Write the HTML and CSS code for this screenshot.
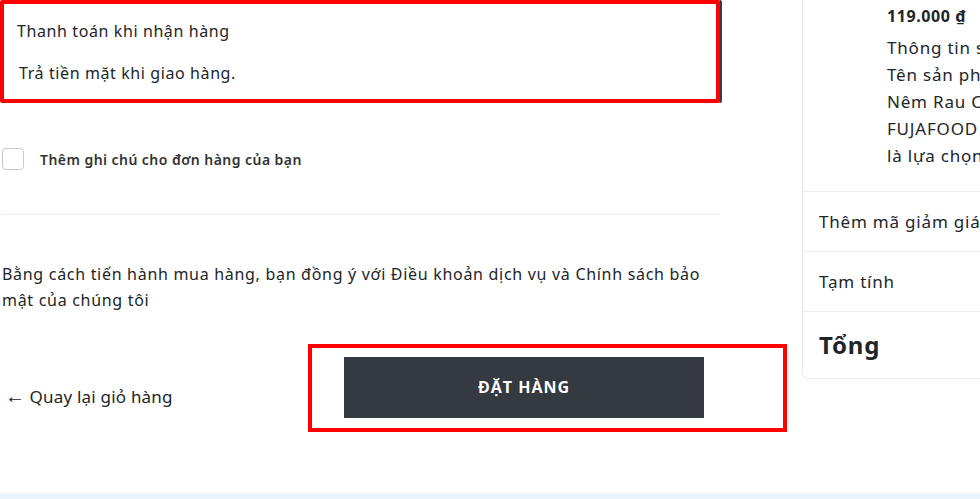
FILE: index.html
```html
<!DOCTYPE html>
<html lang="vi">
<head>
    <meta charset="UTF-8">
    <meta name="viewport" content="width=device-width, initial-scale=1.0">
    <title>Thanh toán</title>
    <link rel="stylesheet" href="styles.css">
</head>
<body>
    <div class="checkout">
        <div class="main">
            <div class="payment-option">
                <div class="payment-name">Thanh toán khi nhận hàng</div>
                <div class="payment-desc">Trả tiền mặt khi giao hàng.</div>
            </div>

            <label class="note-toggle">
                <span class="checkbox"></span>
                <span class="note-label">Thêm ghi chú cho đơn hàng của bạn</span>
            </label>

            <div class="divider"></div>

            <p class="terms">Bằng cách tiến hành mua hàng, bạn đồng ý với Điều khoản dịch vụ và Chính sách bảo mật của chúng tôi</p>

            <div class="actions">
                <a href="#" class="back-link"><span class="arrow">←</span> Quay lại giỏ hàng</a>
                <div class="submit-wrap">
                    <button class="submit">ĐẶT HÀNG</button>
                </div>
            </div>
        </div>

        <div class="summary">
            <div class="product">
                <div class="product-thumb"></div>
                <div class="product-info">
                    <div class="product-price">119.000 ₫</div>
                    <div class="product-desc">Thông tin sản phẩm<br>Tên sản phẩm: Hạt<br>Nêm Rau Củ<br>FUJAFOOD – Gia vị<br>là lựa chọn tuyệt vời</div>
                </div>
            </div>
            <div class="summary-row">Thêm mã giảm giá</div>
            <div class="summary-row">Tạm tính</div>
            <div class="summary-row total">Tổng</div>
        </div>
    </div>
    <div class="footer-strip"></div>
</body>
</html>
```

FILE: styles.css
```css
html, body {
    margin: 0;
    height: 100%;
    overflow: hidden;
}
body {
    font-family: 'Noto Sans', sans-serif;
    letter-spacing: 0.6px;
    color: #212529;
    background-color: #fff;
    display: flex;
    flex-direction: column;
}
.checkout {
    display: flex;
    gap: 82px;
    flex: 1;
    min-width: 0;
}
.main {
    width: 720px;
    flex-shrink: 0;
}
.payment-option {
    height: 103px;
    box-sizing: border-box;
    border: 4px solid #ff0000;
    box-shadow: 2px 0 0 #3a3d40;
    border-radius: 2px;
    padding: 16px 13px 0 13px;
    font-size: 16px;
}
.payment-name {
    line-height: 22px;
}
.payment-desc {
    margin-top: 20px;
    padding-left: 2px;
    line-height: 22px;
}
.note-toggle {
    display: flex;
    align-items: center;
    gap: 16px;
    margin: 45px 0 0 2px;
    cursor: pointer;
}
.checkbox {
    width: 22px;
    height: 22px;
    box-sizing: border-box;
    border: 1px solid #c8c8c8;
    border-radius: 4px;
}
.note-label {
    font-size: 14px;
    font-weight: 600;
    letter-spacing: 0.45px;
    color: #333;
}
.divider {
    height: 1px;
    background-color: #ececec;
    margin: 44px 0 0 2px;
}
.terms {
    font-size: 16px;
    line-height: 26px;
    letter-spacing: 0.7px;
    margin: 46px 0 0 2px;
}
.actions {
    display: grid;
    grid-template-columns: 308px 479px;
    align-items: center;
    margin-top: 31px;
}
.back-link {
    font-size: 17px;
    letter-spacing: 0.2px;
    color: #212529;
    text-decoration: none;
    padding-left: 5px;
    margin-top: 14px;
}
.arrow {
    font-size: 20px;
    letter-spacing: 0;
}
.submit-wrap {
    border: 4px solid #ff0000;
    height: 88px;
    box-sizing: border-box;
    padding: 9px 0 0 32px;
}
.submit {
    width: 360px;
    height: 61px;
    border: none;
    background-color: #343a40;
    color: #fff;
    font-family: 'Open Sans', sans-serif;
    font-size: 16px;
    font-weight: 700;
    letter-spacing: 1px;
    padding-bottom: 3px;
    cursor: pointer;
}
.summary {
    width: 420px;
    flex-shrink: 0;
    align-self: flex-start;
    border: 1px solid #ececec;
    border-top: none;
    border-radius: 0 0 6px 6px;
    box-sizing: border-box;
}
.product {
    display: flex;
    gap: 16px;
    padding: 4px 16px 20px 16px;
    height: 191px;
    box-sizing: border-box;
}
.product-thumb {
    width: 52px;
    flex-shrink: 0;
}
.product-price {
    font-size: 16px;
    font-weight: 700;
    line-height: 24px;
}
.product-desc {
    font-size: 17px;
    line-height: 27px;
    letter-spacing: 0.8px;
    margin-top: 6px;
    white-space: nowrap;
}
.summary-row {
    border-top: 1px solid #ececec;
    height: 59px;
    display: flex;
    align-items: center;
    padding-left: 16px;
    font-size: 17px;
    letter-spacing: 0.8px;
    white-space: nowrap;
}
.summary-row.total {
    font-size: 24px;
    font-weight: 700;
    height: 67px;
    padding-bottom: 2px;
    box-sizing: border-box;
}
.footer-strip {
    height: 6px;
    background-color: #eaf6fb;
}
```
